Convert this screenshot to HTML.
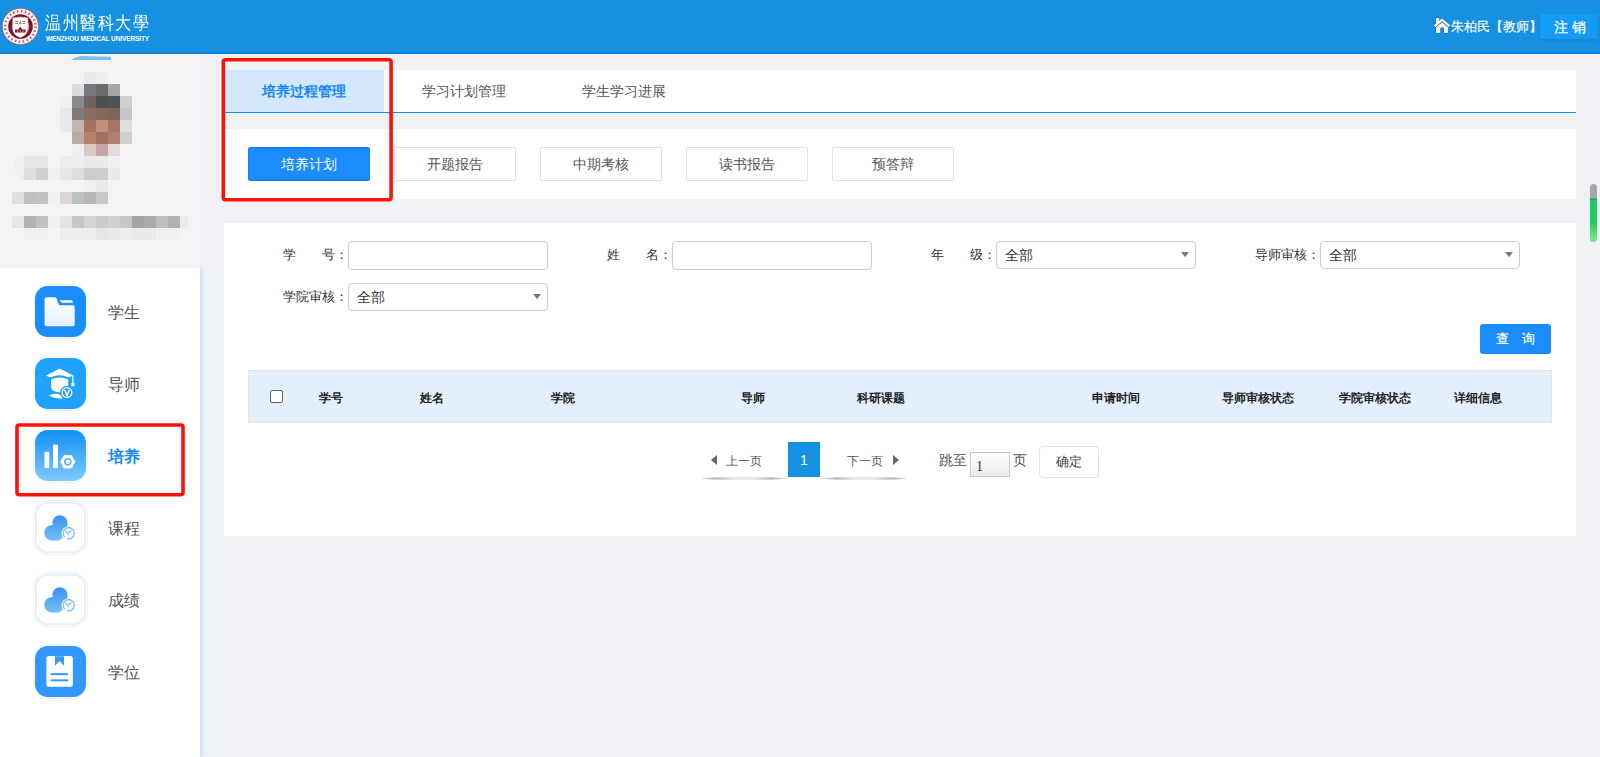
<!DOCTYPE html>
<html><head><meta charset="utf-8">
<style>
*{margin:0;padding:0;box-sizing:border-box;}
html,body{width:1600px;height:757px;overflow:hidden;background:#f0f2f5;font-family:"Liberation Sans",sans-serif;}
.abs{position:absolute;}
#hdr{position:absolute;left:0;top:0;width:1600px;height:54px;background:#1690e0;}
#side{position:absolute;left:0;top:54px;width:200px;height:703px;background:#fff;}
#navbg{position:absolute;left:0;top:214px;width:200px;height:489px;background:#fff;box-shadow:0 0 6px rgba(150,190,250,.75);}
#prof{position:absolute;left:0;top:0;width:200px;height:214px;background:#f4f4f5;}
.px{position:absolute;width:12px;height:12px;}
.nav{position:absolute;left:32px;width:56px;height:56px;}
.nav .ic{position:absolute;left:3px;top:2px;width:51px;height:51px;}
.nav .ring{position:absolute;left:1px;top:0;width:55px;height:55px;border-radius:15px;border:1.5px solid #f1f2f5;}
.nav .lb{position:absolute;left:76px;top:18px;font-size:16px;color:#555;white-space:nowrap;line-height:22px;}
.panel{position:absolute;left:224px;width:1352px;background:#fff;}
.tab{position:absolute;top:0;height:42px;line-height:42px;font-size:14px;color:#555;text-align:center;}
.sbtn{position:absolute;top:18px;width:122px;height:34px;border:1px solid #e2e2e2;border-radius:2px;font-size:14px;color:#555;text-align:center;line-height:32px;background:#fff;}
.lbl{position:absolute;font-size:13px;color:#333;line-height:16px;white-space:nowrap;}
.inp{position:absolute;width:200px;height:29px;border:1px solid #ccc;border-radius:4px;background:#fff;}
.sel{font-size:13.5px;color:#333;line-height:27px;padding-left:8px;height:28px;}
.sel:after{content:"";position:absolute;right:6px;top:10px;border-left:4.5px solid transparent;border-right:4.5px solid transparent;border-top:5px solid #777;}
.th{position:absolute;top:19px;font-size:12px;font-weight:bold;color:#222;line-height:16px;white-space:nowrap;}
.pg{position:absolute;height:28px;border-bottom:0;}
.pg:after{content:"";position:absolute;left:0;right:0;bottom:-3px;height:3px;background:linear-gradient(90deg,rgba(0,0,0,.12),rgba(0,0,0,.3) 15%,rgba(0,0,0,.1) 35%,rgba(0,0,0,.08) 50%,rgba(0,0,0,.1) 65%,rgba(0,0,0,.3) 85%,rgba(0,0,0,.12));border-radius:50%;filter:blur(0.7px);}
.pg span{position:absolute;top:4px;font-size:12px;color:#555;line-height:16px;white-space:nowrap;}
.pg .tri{position:absolute;top:6px;width:0;height:0;border-top:5.3px solid transparent;border-bottom:5.3px solid transparent;}
.red{position:absolute;border:3px solid #f5120f;border-radius:4px;}
</style></head>
<body>
<div id="hdr">
  <div class="abs" style="left:0;top:52px;width:1600px;height:2px;background:#0b80d2"></div>
  <svg class="abs" style="left:0;top:6px" width="42" height="42" viewBox="0 0 42 42">
    <circle cx="20.4" cy="20.4" r="18.2" fill="#fdf6f6" stroke="#a0404c" stroke-width="0.7"/>
    <circle cx="20.4" cy="20.4" r="15.3" fill="none" stroke="#b86a74" stroke-width="2.6" stroke-dasharray="1.6 2.4"/>
    <circle cx="20.5" cy="20.5" r="10.5" fill="none" stroke="#7e1024" stroke-width="3.6"/>
    <path d="M12.3 11.4 Q20.3 10.2 28.2 11.4 L28.2 22.5 Q28.2 29.2 20.3 32 Q12.3 29.2 12.3 22.5 Z" fill="#fff" stroke="#8a1a2c" stroke-width="0.5"/>
    <path d="M15 15.5h3.5M22 15.5h3.5M15.5 17.5h2.5M22.5 17.5h2.5M19 17.6h2.6M20.3 14.5v4" stroke="#b5707a" stroke-width="1"/>
    <path d="M15 26.5 V23.5 L18.3 23.5 L20.3 20.8 L22.3 23.5 L25.6 23.5 V26.5 Z" fill="#8a1a2c"/>
    <path d="M17 25h1.2M19.6 25h1.4M22.4 25h1.2" stroke="#fff" stroke-width="0.8"/>
  </svg>
  <div class="abs" style="left:45px;top:9.5px;font-family:'Liberation Serif',serif;font-size:16px;color:#fff;letter-spacing:1.5px;line-height:24px;white-space:nowrap;transform:scaleY(1.12);transform-origin:0 0;">温州醫科大學</div>
  <div class="abs" style="left:46px;top:34.5px;font-size:6.5px;font-weight:bold;color:#fff;line-height:8px;white-space:nowrap;letter-spacing:-0.1px">WENZHOU MEDICAL UNIVERSITY</div>
  <svg class="abs" style="left:1433px;top:17px;filter:drop-shadow(0 0 0.8px #0a6cc0)" width="18" height="18" viewBox="0 0 18 18">
    <rect x="3" y="1.1" width="3.2" height="5" fill="#f6f2f2"/>
    <path d="M0.9 8.2 L9.1 1.5 L17.2 8.3 L15.8 9.9 L9.1 4.3 L2.3 9.9 Z" fill="#fff"/>
    <path d="M3 10.3 L9.1 5.5 L15.1 10.3 V16.1 H11 V12.3 Q11 10.3 9.1 10.3 Q7.2 10.3 7.2 12.3 V16.1 H3 Z" fill="#f3efef"/>
  </svg>
  <div class="abs" style="left:1451px;top:17.8px;font-size:12.5px;color:#fff;line-height:18px;white-space:nowrap;-webkit-text-stroke:0.15px #fff">朱柏民【教师】</div>
  <div class="abs" style="left:1540px;top:14px;width:58px;height:25px;background:linear-gradient(90deg,#139cf6 85%,#1696ea);color:#fff;font-size:14px;line-height:27px;padding-left:14px;white-space:nowrap;-webkit-text-stroke:0.25px #fff;box-shadow:0 1px 2px rgba(0,60,120,.15)">注 销</div>
</div>

<div id="side">
  <div id="navbg"></div>
  <div id="prof">
<i class="abs" style="left:15px;top:102px;width:9px;height:24px;background:#f0f0f0;clip-path:polygon(30% 0,100% 0,100% 100%,75% 100%,0 75%,0 20%)"></i>
<div class="abs" style="left:71px;top:2px;width:40px;height:4px;background:#80c0ec;clip-path:polygon(0 100%,10% 40%,25% 0,100% 20%,100% 100%)"></div>
<i class="px" style="left:84px;top:18px;background:#eaebed"></i>
<i class="px" style="left:96px;top:18px;background:#eeeff1"></i>
<i class="px" style="left:72px;top:30px;background:#dcdcde"></i>
<i class="px" style="left:84px;top:30px;background:#77787c"></i>
<i class="px" style="left:96px;top:30px;background:#6a6a6a"></i>
<i class="px" style="left:108px;top:30px;background:#a5a6a6"></i>
<i class="px" style="left:60px;top:42px;background:#eef0f2"></i>
<i class="px" style="left:72px;top:42px;background:#88878c"></i>
<i class="px" style="left:84px;top:42px;background:#6c625f"></i>
<i class="px" style="left:96px;top:42px;background:#505050"></i>
<i class="px" style="left:108px;top:42px;background:#525252"></i>
<i class="px" style="left:120px;top:42px;background:#cdcece"></i>
<i class="px" style="left:60px;top:54px;background:#e6eced"></i>
<i class="px" style="left:72px;top:54px;background:#7e7a77"></i>
<i class="px" style="left:84px;top:54px;background:#8a6b60"></i>
<i class="px" style="left:96px;top:54px;background:#85675b"></i>
<i class="px" style="left:108px;top:54px;background:#7b655c"></i>
<i class="px" style="left:120px;top:54px;background:#c5c6c6"></i>
<i class="px" style="left:60px;top:66px;background:#e6eced"></i>
<i class="px" style="left:72px;top:66px;background:#c6b5ae"></i>
<i class="px" style="left:84px;top:66px;background:#a57062"></i>
<i class="px" style="left:96px;top:66px;background:#c28f7d"></i>
<i class="px" style="left:108px;top:66px;background:#a87564"></i>
<i class="px" style="left:120px;top:66px;background:#dcdedd"></i>
<i class="px" style="left:72px;top:78px;background:#b7aaa7"></i>
<i class="px" style="left:84px;top:78px;background:#b87f6a"></i>
<i class="px" style="left:96px;top:78px;background:#a36f64"></i>
<i class="px" style="left:108px;top:78px;background:#b0816c"></i>
<i class="px" style="left:120px;top:78px;background:#cfd0d0"></i>
<i class="px" style="left:72px;top:90px;background:#f0f0f0"></i>
<i class="px" style="left:84px;top:90px;background:#dac7c1"></i>
<i class="px" style="left:96px;top:90px;background:#c9a4a5"></i>
<i class="px" style="left:108px;top:90px;background:#e4dbd6"></i>
<i class="px" style="left:24px;top:102px;background:#e6e6e6"></i>
<i class="px" style="left:36px;top:102px;background:#e6e6e6"></i>
<i class="px" style="left:60px;top:102px;background:#eeeeee"></i>
<i class="px" style="left:72px;top:102px;background:#efefef"></i>
<i class="px" style="left:84px;top:102px;background:#eaeaea"></i>
<i class="px" style="left:96px;top:102px;background:#ebebeb"></i>
<i class="px" style="left:108px;top:102px;background:#eff0f4"></i>
<i class="px" style="left:24px;top:114px;background:#dfdcdc"></i>
<i class="px" style="left:36px;top:114px;background:#cfd0d2"></i>
<i class="px" style="left:48px;top:114px;background:#f1f1f1"></i>
<i class="px" style="left:60px;top:114px;background:#e6e6e6"></i>
<i class="px" style="left:72px;top:114px;background:#dcdddf"></i>
<i class="px" style="left:84px;top:114px;background:#cccccc"></i>
<i class="px" style="left:96px;top:114px;background:#cdcdcd"></i>
<i class="px" style="left:108px;top:114px;background:#e9eaec"></i>
<i class="px" style="left:84px;top:126px;background:#f0f0f0"></i>
<i class="px" style="left:96px;top:126px;background:#e8e9ea"></i>
<i class="px" style="left:12px;top:138px;background:#e1e0df"></i>
<i class="px" style="left:24px;top:138px;background:#bfbfbf"></i>
<i class="px" style="left:36px;top:138px;background:#bec2c5"></i>
<i class="px" style="left:48px;top:138px;background:#f1f1f1"></i>
<i class="px" style="left:60px;top:138px;background:#ddd5d1"></i>
<i class="px" style="left:72px;top:138px;background:#bcc0c3"></i>
<i class="px" style="left:84px;top:138px;background:#b8b6b9"></i>
<i class="px" style="left:96px;top:138px;background:#c8c8c8"></i>
<i class="px" style="left:12px;top:162px;background:#e8e7e6"></i>
<i class="px" style="left:24px;top:162px;background:#b5b2b4"></i>
<i class="px" style="left:36px;top:162px;background:#bdc1c4"></i>
<i class="px" style="left:48px;top:162px;background:#f1f1f1"></i>
<i class="px" style="left:60px;top:162px;background:#e4e4e4"></i>
<i class="px" style="left:72px;top:162px;background:#c6c6c7"></i>
<i class="px" style="left:84px;top:162px;background:#d5d5d4"></i>
<i class="px" style="left:96px;top:162px;background:#cbcbcb"></i>
<i class="px" style="left:108px;top:162px;background:#d0d1d3"></i>
<i class="px" style="left:120px;top:162px;background:#c6c8c7"></i>
<i class="px" style="left:132px;top:162px;background:#a4a6a5"></i>
<i class="px" style="left:144px;top:162px;background:#a9abac"></i>
<i class="px" style="left:156px;top:162px;background:#bebebc"></i>
<i class="px" style="left:168px;top:162px;background:#b2b1b2"></i>
<i class="px" style="left:24px;top:174px;background:#f0f0f0"></i>
<i class="px" style="left:36px;top:174px;background:#f0f0f0"></i>
<i class="px" style="left:60px;top:174px;background:#eeeeee"></i>
<i class="px" style="left:72px;top:174px;background:#efefef"></i>
<i class="px" style="left:84px;top:174px;background:#eeeeee"></i>
<i class="px" style="left:96px;top:174px;background:#e5e5e5"></i>
<i class="px" style="left:108px;top:174px;background:#e8e8e8"></i>
<i class="px" style="left:120px;top:174px;background:#eeeeee"></i>
<i class="px" style="left:132px;top:174px;background:#ebebeb"></i>
<i class="px" style="left:144px;top:174px;background:#ebebeb"></i>
<i class="px" style="left:156px;top:174px;background:#f0f0f0"></i>
<i class="px" style="left:168px;top:174px;background:#f1f1f1"></i>
<i class="px" style="left:180px;top:162px;width:8px;background:#ebebee"></i>
</div>
  <div class="nav" style="top:230px"><div class="ring"></div><svg class="ic" viewBox="0 0 52 52"><rect width="52" height="52" rx="13" fill="#1b8dfe"/><defs><linearGradient id="fg" x1="0" y1="0" x2="0" y2="1"><stop offset="0" stop-color="#fff"/><stop offset="1" stop-color="#e6f0fc"/></linearGradient></defs><path d="M11.5 11.45 h8.4 q1.5 0 2.2 1.4 l1.8 5.2 q0.6 1.7 2.4 1.7 h12.3 q1.9 0 1.9 1.9 v17.6 q0 1.9 -1.9 1.9 h-26.9 q-1.9 0 -1.9 -1.9 v-26 q0 -1.8 1.7 -1.8 z" fill="url(#fg)"/><path d="M25.4 14.6 h11.4 q1.6 0 1.6 1.2 v1.2 h-11.2 q-1.2 0 -1.8 -2.4 z" fill="#fff"/></svg><div class="lb">学生</div></div>
  <div class="nav" style="top:302px"><div class="ring"></div><svg class="ic" viewBox="0 0 52 52"><rect width="52" height="52" rx="13" fill="#1fa3fe"/><path d="M25 10.7 L39 17.8 L33.8 19.8 Q25 15.6 16.4 19.8 L11.2 18.2 Z" fill="#fff"/><path d="M38.6 18 V26.5" stroke="#fff" stroke-width="1.3"/><rect x="37" y="25.6" width="3.2" height="3.2" fill="#fff"/><path d="M16.4 21.9 Q25 17.7 33.8 21.9 L33.8 29 Q33.8 34.8 25 34.8 Q16.4 34.8 16.4 29 Z" fill="#fff"/><path d="M14.2 38.4 Q18 35.6 23.5 36.6 Q26.5 37.3 28 39.6 L27.6 41.3 Q20 41.6 14.2 38.4 Z" fill="#fff"/><circle cx="32.6" cy="35.2" r="7" fill="#1fa3fe"/><circle cx="32.6" cy="35.2" r="5.6" fill="#fff"/><circle cx="32.6" cy="35.2" r="4.3" fill="#1fa3fe"/><path d="M30.2 32.4 L32.6 38.2 L35 32.4" fill="none" stroke="#fff" stroke-width="1.6"/></svg><div class="lb">导师</div></div>
  <div class="nav" style="top:374px"><div class="ring"></div><svg class="ic" viewBox="0 0 52 52"><defs><linearGradient id="pg" x1="0" y1="0" x2="0" y2="1"><stop offset="0" stop-color="#1290f4"/><stop offset="1" stop-color="#80cafd"/></linearGradient></defs><rect width="52" height="52" rx="13" fill="url(#pg)"/><g transform="translate(0.4 0.8)"><rect x="9.3" y="21.4" width="4.8" height="16.6" fill="#fff"/><rect x="18" y="14.2" width="5" height="23.8" fill="#fff"/><path d="M29.2 25.3 h7.5 l3.6 6.35 l-3.6 6.35 h-7.5 l-3.6 -6.35 z" fill="#fff" stroke="#fff" stroke-width="0.8" stroke-linejoin="round"/><circle cx="33" cy="31.65" r="3.1" fill="none" stroke="#5ab4f8" stroke-width="1.6"/></g></svg><div class="lb" style="color:#1686fd;font-weight:bold">培养</div></div>
  <div class="nav" style="top:446px"><div class="ring"></div><svg class="ic" viewBox="0 0 52 52"><defs><linearGradient id="cg" gradientUnits="userSpaceOnUse" x1="0" y1="12" x2="0" y2="38"><stop offset="0" stop-color="#3a90ef"/><stop offset="1" stop-color="#72c0f6"/></linearGradient></defs><rect x="0.8" y="0.8" width="50.4" height="50.4" rx="12.5" fill="#fff" stroke="#e2edfb" stroke-width="1.6"/><g transform="translate(0.3 1)"><g fill="url(#cg)"><circle cx="25" cy="20.2" r="7.7"/><circle cx="16.8" cy="30.5" r="7.7"/><path d="M16.8 22.8 L25 20.2 L32.7 21 L33.8 30.5 L24 38.2 L16.8 38.2 Z"/></g><circle cx="34" cy="30.8" r="7.2" fill="#fff"/><path d="M29.9 34.8 A5.7 5.7 0 1 1 32.3 36.3" fill="none" stroke="#6ab9f6" stroke-width="1.15"/><path d="M33.6 34.6 V30.8 M33.6 31.2 Q31.6 31 31 28.4 Q33 29 33.6 31.2 M33.8 30.8 Q34.4 28.2 37 28 Q36.4 30.4 33.8 30.8" fill="none" stroke="#78c0f6" stroke-width="0.85"/></g></svg><div class="lb">课程</div></div>
  <div class="nav" style="top:518px"><div class="ring"></div><svg class="ic" viewBox="0 0 52 52"><rect x="0.8" y="0.8" width="50.4" height="50.4" rx="12.5" fill="#fff" stroke="#e2edfb" stroke-width="1.6"/><g transform="translate(0.3 1)"><g fill="url(#cg)"><circle cx="25" cy="20.2" r="7.7"/><circle cx="16.8" cy="30.5" r="7.7"/><path d="M16.8 22.8 L25 20.2 L32.7 21 L33.8 30.5 L24 38.2 L16.8 38.2 Z"/></g><circle cx="34" cy="30.8" r="7.2" fill="#fff"/><path d="M29.9 34.8 A5.7 5.7 0 1 1 32.3 36.3" fill="none" stroke="#6ab9f6" stroke-width="1.15"/><path d="M33.6 34.6 V30.8 M33.6 31.2 Q31.6 31 31 28.4 Q33 29 33.6 31.2 M33.8 30.8 Q34.4 28.2 37 28 Q36.4 30.4 33.8 30.8" fill="none" stroke="#78c0f6" stroke-width="0.85"/></g></svg><div class="lb">成绩</div></div>
  <div class="nav" style="top:590px"><div class="ring"></div><svg class="ic" viewBox="0 0 52 52"><rect width="52" height="52" rx="13" fill="#3298fd"/><rect x="11.6" y="10.3" width="27" height="31.3" rx="2.6" fill="#fff"/><path d="M20.4 10.5 H29.5 V19.8 L25 15.4 L20.4 19.8 Z" fill="#3298fd"/><rect x="16" y="27.7" width="17.8" height="2" fill="#3298fd"/><rect x="16" y="34" width="17.8" height="2" fill="#3298fd"/></svg><div class="lb">学位</div></div>
</div>

<!-- tabs -->
<div class="panel" style="top:70px;height:43px;border-bottom:1px solid #1d8ce6;">
  <div class="tab" style="left:0;width:160px;background:#d3e8fc;color:#1686fd;font-weight:bold">培养过程管理</div>
  <div class="tab" style="left:160px;width:160px">学习计划管理</div>
  <div class="tab" style="left:320px;width:160px">学生学习进展</div>
</div>
<!-- sub buttons -->
<div class="panel" style="top:129px;height:70px;">
  <div class="sbtn" style="left:24px;background:#1a8cfb;border-color:#1483ee;color:#fff">培养计划</div>
  <div class="sbtn" style="left:170px">开题报告</div>
  <div class="sbtn" style="left:316px">中期考核</div>
  <div class="sbtn" style="left:462px">读书报告</div>
  <div class="sbtn" style="left:608px">预答辩</div>
</div>
<!-- search -->
<div class="panel" style="top:223px;height:313px;">
  <div class="lbl" style="left:59px;top:24px">学　　号：</div>
  <div class="inp" style="left:124px;top:18px"></div>
  <div class="lbl" style="left:383px;top:24px">姓　　名：</div>
  <div class="inp" style="left:448px;top:18px"></div>
  <div class="lbl" style="left:707px;top:24px">年　　级：</div>
  <div class="inp sel" style="left:772px;top:18px">全部</div>
  <div class="lbl" style="left:1031px;top:24px">导师审核：</div>
  <div class="inp sel" style="left:1096px;top:18px">全部</div>
  <div class="lbl" style="left:59px;top:66px">学院审核：</div>
  <div class="inp sel" style="left:124px;top:60px">全部</div>
  <div class="abs" style="left:1256px;top:101px;width:71px;height:30px;background:#1a8cfb;border-radius:3px;color:#fff;font-size:13px;line-height:30px;text-align:center;-webkit-text-stroke:0.2px #fff">查　询</div>
  <div class="abs" style="left:24px;top:147px;width:1304px;height:53px;background:#e4effc;border:1px solid #e3e6ea">
    <div class="abs" style="left:21px;top:19px;width:13px;height:13px;border:1px solid #666;border-radius:2px;background:#fff"></div>
    <div class="th" style="left:70px">学号</div>
    <div class="th" style="left:171px">姓名</div>
    <div class="th" style="left:302px">学院</div>
    <div class="th" style="left:492px">导师</div>
    <div class="th" style="left:608px">科研课题</div>
    <div class="th" style="left:843px">申请时间</div>
    <div class="th" style="left:973px">导师审核状态</div>
    <div class="th" style="left:1090px">学院审核状态</div>
    <div class="th" style="left:1205px">详细信息</div>
  </div>
  <!-- pagination -->
  <div class="pg" style="left:477px;top:226px;width:85px">
    <i class="tri" style="left:10px;border-right:6px solid #666"></i>
    <span style="left:25px">上一页</span>
  </div>
  <div class="abs" style="left:564px;top:219px;width:32px;height:35px;background:#1690e0;color:#fff;font-size:14px;line-height:37px;text-align:center">1</div>
  <div class="pg" style="left:598px;top:226px;width:85px">
    <span style="left:25px">下一页</span>
    <i class="tri" style="left:71px;border-left:6px solid #666"></i>
  </div>
  <div class="abs" style="left:715px;top:229px;font-size:14px;color:#555;line-height:16px">跳至</div>
  <div class="abs" style="left:746px;top:229px;width:40px;height:25px;border:1px solid #c8c8c8;background:linear-gradient(#fff,#ececec);font-family:'Liberation Serif',serif;font-size:14px;color:#333;line-height:27px;padding-left:5px">1</div>
  <div class="abs" style="left:789px;top:229px;font-size:14px;color:#555;line-height:16px">页</div>
  <div class="abs" style="left:815px;top:223px;width:60px;height:32px;border:1px solid #e2e2e2;border-radius:4px;font-size:13px;color:#444;line-height:30px;text-align:center">确定</div>
</div>

<svg class="abs" style="left:0;top:0" width="1600" height="757"><g fill="none" stroke="#ff1206" stroke-width="3.6"><rect x="223.3" y="59.8" width="167.8" height="140" rx="2.2"/><rect x="17" y="425" width="166" height="69.8" rx="2.2"/></g></svg>
<div class="abs" style="left:1587px;top:180px;width:13px;height:70px;background:radial-gradient(ellipse at center,rgba(0,0,0,.08),rgba(0,0,0,0) 70%)"></div>
<div class="abs" style="left:1590px;top:184px;width:7px;height:58px;border-radius:4px;background:linear-gradient(#a7a7a9 0,#a7a7a9 14px,#199e4c 15px,#21c968 17px,#21c968 38px,#6de581 54px)"></div>
</body></html>
